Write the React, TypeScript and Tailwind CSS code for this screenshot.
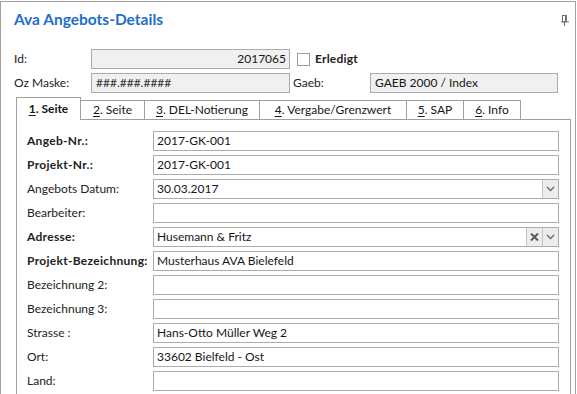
import React from "react";

const font = { fontFamily: 'Lato, "Noto Sans", sans-serif' };

function Chevron() {
  return (
    <svg width="9" height="6" viewBox="0 0 9 6">
      <path d="M1 1 L4.5 4.5 L8 1" fill="none" stroke="#6b6b6b" strokeWidth="1.4" />
    </svg>
  );
}

function XIcon() {
  return (
    <svg width="9" height="8" viewBox="0 0 9 8">
      <path d="M1 0.5 L8 7.5 M8 0.5 L1 7.5" fill="none" stroke="#5a5a5a" strokeWidth="2" />
    </svg>
  );
}

function Field({ value, combo, clear }: { value?: string; combo?: boolean; clear?: boolean }) {
  return (
    <div className="flex h-[20px] w-[406px] items-stretch border border-[#ababab] bg-white">
      <div className="flex flex-1 items-center pl-[3px] text-[12px] text-[#161616] whitespace-nowrap">{value}</div>
      {clear && (
        <div className="flex w-[16px] items-center justify-center border-l border-[#c4c4c4] bg-[#ededed]">
          <XIcon />
        </div>
      )}
      {combo && (
        <div className="flex w-[16px] items-center justify-center border-l border-[#c4c4c4] bg-[#ededed]">
          <Chevron />
        </div>
      )}
    </div>
  );
}

const rows: { label: string; bold?: boolean; value?: string; combo?: boolean; clear?: boolean }[] = [
  { label: "Angeb-Nr.:", bold: true, value: "2017-GK-001" },
  { label: "Projekt-Nr.:", bold: true, value: "2017-GK-001" },
  { label: "Angebots Datum:", value: "30.03.2017", combo: true },
  { label: "Bearbeiter:" },
  { label: "Adresse:", bold: true, value: "Husemann & Fritz", combo: true, clear: true },
  { label: "Projekt-Bezeichnung:", bold: true, value: "Musterhaus AVA Bielefeld" },
  { label: "Bezeichnung 2:" },
  { label: "Bezeichnung 3:" },
  { label: "Strasse :", value: "Hans-Otto Müller Weg 2" },
  { label: "Ort:", value: "33602 Bielfeld - Ost" },
  { label: "Land:" },
];

const tabs: { n: string; rest: string; w: string }[] = [
  { n: "2", rest: ". Seite", w: "w-[64px]" },
  { n: "3", rest: ". DEL-Notierung", w: "w-[115px]" },
  { n: "4", rest: ". Vergabe/Grenzwert", w: "w-[147px]" },
  { n: "5", rest: ". SAP", w: "w-[57px]" },
  { n: "6", rest: ". Info", w: "w-[57px]" },
];

export default function App() {
  return (
    <div className="h-[394px] w-[577px] overflow-hidden bg-white" style={font}>
      <div className="mt-px h-[400px] w-[576px] border-l border-r border-t border-[#a0a0a0]">
        {/* Title */}
        <div className="flex items-center justify-between pl-[13px] pr-[6px] pt-[7px]">
          <div className="h-[20px] text-[15.5px] font-bold leading-[20px] text-[#1e6ec8]">Ava Angebots-Details</div>
          <svg width="8" height="11" viewBox="0 0 8 11" className="mt-[2px]">
            <rect x="1.5" y="0.5" width="4" height="6" fill="none" stroke="#707070" strokeWidth="1" />
            <rect x="4" y="1" width="1.5" height="5.5" fill="#707070" />
            <path d="M0 7 H8" stroke="#707070" strokeWidth="1" />
            <path d="M3.5 7 V11" stroke="#707070" strokeWidth="1" />
          </svg>
        </div>

        {/* Header rows */}
        <div className="mt-[20px] flex flex-col gap-[4px] pl-[13px]">
          <div className="flex h-[20px] items-center">
            <div className="w-[77px] text-[12px] text-[#222]">Id:</div>
            <div className="flex h-[20px] w-[199px] items-center justify-end border border-[#ababab] bg-[#f0f0f0] pr-[3px] text-[12px] text-[#161616]">
              2017065
            </div>
            <div className="ml-[7px] h-[13px] w-[13px] border border-[#9c9c9c] bg-white" />
            <div className="ml-[5px] text-[12px] font-bold tracking-[0.2px] text-[#222]">Erledigt</div>
          </div>
          <div className="flex h-[20px] items-center">
            <div className="w-[77px] text-[12px] text-[#222]">Oz Maske:</div>
            <div className="flex h-[20px] w-[199px] items-center border border-[#ababab] bg-[#f0f0f0] pl-[4px] text-[12px] text-[#333]">
              ###.###.####
            </div>
            <div className="ml-[3px] w-[77px] text-[12px] text-[#222]">Gaeb:</div>
            <div className="flex h-[20px] w-[188px] items-center border border-[#ababab] bg-[#f0f0f0] pl-[4px] text-[12px] text-[#161616]">
              GAEB 2000 / Index
            </div>
          </div>
        </div>

        {/* Tabs */}
        <div className="ml-[15px] mt-[4px] w-[555px]">
          <div className="flex items-end">
            <div className="flex h-[23px] w-[65px] items-center justify-center border-l border-r border-t border-[#a0a0a0] bg-white text-[12px] font-bold text-[#161616]">
              <span className="underline underline-offset-2">1</span>. Seite
            </div>
            {tabs.map((t) => (
              <div
                key={t.n}
                className={`flex h-[20px] ${t.w} items-center justify-center border-b border-r border-t border-[#a0a0a0] bg-white text-[12px] text-[#161616]`}
              >
                <span className="underline underline-offset-2">{t.n}</span>
                {t.rest}
              </div>
            ))}
            <div className="h-[20px] flex-1 border-b border-[#a0a0a0]" />
          </div>
          <div className="flex h-[300px] flex-col gap-[4px] border-l border-r border-[#a0a0a0] pl-[10px] pt-[11px]">
            {rows.map((r) => (
              <div key={r.label} className="flex h-[20px] items-center">
                <div
                  className={`w-[126px] whitespace-nowrap text-[12px] text-[#222] ${r.bold ? "font-bold tracking-[0.3px]" : ""}`}
                >
                  {r.label}
                </div>
                <Field value={r.value} combo={r.combo} clear={r.clear} />
              </div>
            ))}
          </div>
        </div>
      </div>
    </div>
  );
}
